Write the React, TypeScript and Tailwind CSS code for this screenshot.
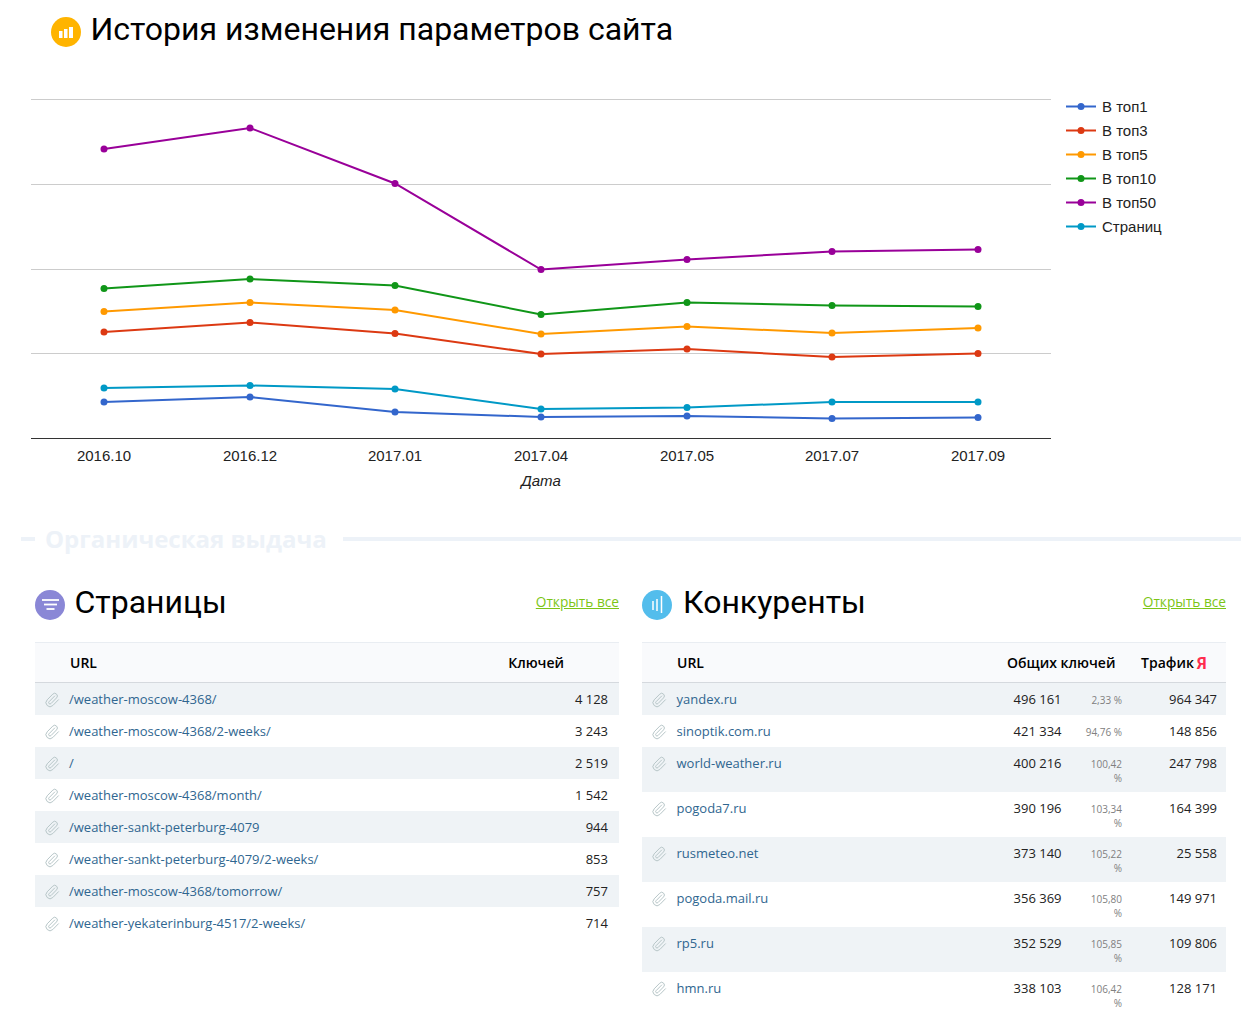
import { Paperclip } from 'lucide-react';

const xs = [104, 250, 395, 541, 687, 832, 978];
const labels = ['2016.10', '2016.12', '2017.01', '2017.04', '2017.05', '2017.07', '2017.09'];
const series = [
  { name: 'В топ1', color: '#3366cc', ys: [402, 397, 412, 417, 416, 418.5, 417.5] },
  { name: 'В топ3', color: '#dc3912', ys: [332, 322.5, 333.5, 354, 349, 357, 353.5] },
  { name: 'В топ5', color: '#ff9900', ys: [311.5, 302.5, 310, 334, 326.5, 333, 328] },
  { name: 'В топ10', color: '#109618', ys: [288.5, 279, 285.5, 314.5, 302.5, 305.5, 306.5] },
  { name: 'В топ50', color: '#990099', ys: [149, 128, 183.5, 269.5, 259.5, 251.5, 249.5] },
  { name: 'Страниц', color: '#0099c6', ys: [388, 385.5, 389, 409, 407.5, 402, 402] },
];

const pages = [
  { url: '/weather-moscow-4368/', keys: '4 128' },
  { url: '/weather-moscow-4368/2-weeks/', keys: '3 243' },
  { url: '/', keys: '2 519' },
  { url: '/weather-moscow-4368/month/', keys: '1 542' },
  { url: '/weather-sankt-peterburg-4079', keys: '944' },
  { url: '/weather-sankt-peterburg-4079/2-weeks/', keys: '853' },
  { url: '/weather-moscow-4368/tomorrow/', keys: '757' },
  { url: '/weather-yekaterinburg-4517/2-weeks/', keys: '714' },
];

const rivals = [
  { url: 'yandex.ru', keys: '496 161', pct: '2,33 %', traffic: '964 347' },
  { url: 'sinoptik.com.ru', keys: '421 334', pct: '94,76 %', traffic: '148 856' },
  { url: 'world-weather.ru', keys: '400 216', pct: '100,42 %', traffic: '247 798' },
  { url: 'pogoda7.ru', keys: '390 196', pct: '103,34 %', traffic: '164 399' },
  { url: 'rusmeteo.net', keys: '373 140', pct: '105,22 %', traffic: '25 558' },
  { url: 'pogoda.mail.ru', keys: '356 369', pct: '105,80 %', traffic: '149 971' },
  { url: 'rp5.ru', keys: '352 529', pct: '105,85 %', traffic: '109 806' },
  { url: 'hmn.ru', keys: '338 103', pct: '106,42 %', traffic: '128 171' },
];

function Chart() {
  return (
    <svg width="1255" height="430" viewBox="0 80 1255 430" className="block">
      {[99.5, 184.5, 269.5, 353.5].map((y) => (
        <line key={y} x1="31" x2="1051" y1={y} y2={y} stroke="#cccccc" />
      ))}
      <line x1="31" x2="1051" y1="438.5" y2="438.5" stroke="#333333" />
      {series.map((s) => (
        <g key={s.name}>
          <polyline
            points={s.ys.map((y, i) => `${xs[i]},${y}`).join(' ')}
            fill="none"
            stroke={s.color}
            strokeWidth="2"
          />
          {s.ys.map((y, i) => (
            <circle key={i} cx={xs[i]} cy={y} r="3.5" fill={s.color} />
          ))}
        </g>
      ))}
      {labels.map((l, i) => (
        <text key={l} x={xs[i]} y="461" textAnchor="middle" fontSize="15" fill="#222222" fontFamily="'Liberation Sans', sans-serif">
          {l}
        </text>
      ))}
      <text x="541" y="486" textAnchor="middle" fontSize="15" fontStyle="italic" fill="#222222" fontFamily="'Liberation Sans', sans-serif">
        Дата
      </text>
      {series.map((s, i) => (
        <g key={s.name}>
          <line x1="1066" x2="1096" y1={106.5 + i * 24} y2={106.5 + i * 24} stroke={s.color} strokeWidth="2" />
          <circle cx="1081" cy={106.5 + i * 24} r="3.5" fill={s.color} />
          <text x="1102" y={112 + i * 24} fontSize="15" fill="#222222" fontFamily="'Liberation Sans', sans-serif">
            {s.name}
          </text>
        </g>
      ))}
    </svg>
  );
}

function Clip() {
  return <Paperclip size={16} strokeWidth={1.5} className="text-[#b7c6c8] shrink-0" />;
}

function OpenAll() {
  return (
    <a className="text-[13.7px] leading-none text-[#7cc516] underline font-['Open_Sans',sans-serif]">Открыть все</a>
  );
}

export default function App() {
  return (
    <div className="w-[1255px] h-[1023px] overflow-hidden bg-white font-['Open_Sans',sans-serif] text-[13px] text-[#222]">
      {/* Заголовок */}
      <div className="flex gap-[9.5px] pl-[51px] pt-[9px] h-[80px] items-start">
        <div className="w-[30px] h-[30px] mt-[8px] rounded-full bg-[#ffb400] flex items-center justify-center">
          <svg width="14" height="11" viewBox="0 0 14 11" fill="#ffffff">
            <rect x="0" y="4" width="3.5" height="7" />
            <rect x="5" y="2" width="3.5" height="9" />
            <rect x="10" y="0" width="4" height="11" />
          </svg>
        </div>
        <h1 className="font-['Roboto',sans-serif] text-[32px] leading-[40px] text-black">История изменения параметров сайта</h1>
      </div>

      <Chart />

      {/* Органическая выдача */}
      <div className="flex items-center pl-[21px] pr-[14px] h-[40px] mt-[9px]">
        <div className="w-[14px] h-[4px] bg-[#edf2f8]" />
        <div className="ml-[10px] mr-[16px] text-[24px] font-bold text-[#edf2f8] leading-none">Органическая выдача</div>
        <div className="flex-1 h-[4px] bg-[#edf2f8]" />
      </div>

      <div className="flex gap-[23px] pl-[35px] mt-[13px]">
        {/* Страницы */}
        <div className="w-[584px]">
          <div className="flex items-center justify-between h-[60px] mb-[10px]">
            <div className="flex items-center gap-[10px]">
              <div className="w-[30px] h-[30px] mt-[5px] rounded-full bg-[#8a87d6] flex items-center justify-center">
                <svg width="17" height="11" viewBox="0 0 17 11" stroke="#ffffff" strokeWidth="1.8">
                  <line x1="0" x2="17" y1="1" y2="1" />
                  <line x1="2" x2="15" y1="5.5" y2="5.5" />
                  <line x1="4.5" x2="12.5" y1="10" y2="10" />
                </svg>
              </div>
              <h2 className="font-['Roboto',sans-serif] text-[32px] leading-[40px] text-black -ml-[0.5px]">Страницы</h2>
            </div>
            <OpenAll />
          </div>
          <div className="flex items-center justify-between h-[41px] bg-[#f9fafc] border-y border-t-[#e9edf2] border-b-[#d5d9de] pl-[35px] pr-[55px] text-[14px] font-semibold text-black">
            <span>URL</span>
            <span>Ключей</span>
          </div>
          {pages.map((p) => (
            <div key={p.url} className="flex items-center h-[32px] pt-[2px] pl-[9px] pr-[11px] odd:bg-[#eff3f6]">
              <Clip />
              <a className="ml-[9px] flex-1 text-[#2f6690]">{p.url}</a>
              <span>{p.keys}</span>
            </div>
          ))}
        </div>

        {/* Конкуренты */}
        <div className="w-[584px]">
          <div className="flex items-center justify-between h-[60px] mb-[10px]">
            <div className="flex items-center gap-[11px]">
              <div className="w-[30px] h-[30px] mt-[5px] rounded-full bg-[#53bdec] flex items-center justify-center">
                <svg width="11" height="17" viewBox="0 0 11 17" stroke="#ffffff" strokeWidth="1.5">
                  <line x1="1" x2="1" y1="5" y2="14" />
                  <line x1="5" x2="5" y1="3" y2="15" />
                  <line x1="9.5" x2="9.5" y1="0" y2="17" />
                </svg>
              </div>
              <h2 className="font-['Roboto',sans-serif] text-[32px] leading-[40px] text-black">Конкуренты</h2>
            </div>
            <OpenAll />
          </div>
          <div className="flex items-center h-[41px] bg-[#f9fafc] border-y border-t-[#e9edf2] border-b-[#d5d9de] pl-[35px] text-[14px] font-semibold text-black">
            <span className="flex-1">URL</span>
            <span className="w-[134px]">Общих ключей</span>
            <span className="w-[85px] flex items-center gap-[3px]">
              Трафик <b className="text-[#ff2d4e] font-['Roboto',sans-serif] font-bold text-[16px] leading-[14px] pt-[2px]">Я</b>
            </span>
          </div>
          {rivals.map((r) => (
            <div key={r.url} className="flex items-start pt-[7px] pb-[7px] min-h-[32px] pl-[9px] pr-[9px] odd:bg-[#eff3f6]">
              <div className="pt-[2px]">
                <Clip />
              </div>
              <a className="ml-[9.5px] flex-1 text-[#2f6690] leading-[18px]">{r.url}</a>
              <span className="leading-[18px]">{r.keys}</span>
              <span className="w-[38px] ml-[22.5px] mr-[1px] text-right text-[10px] leading-[14px] text-[#808080] pt-[3px]">{r.pct}</span>
              <span className="w-[94px] text-right leading-[18px]">{r.traffic}</span>
            </div>
          ))}
        </div>
      </div>
    </div>
  );
}
